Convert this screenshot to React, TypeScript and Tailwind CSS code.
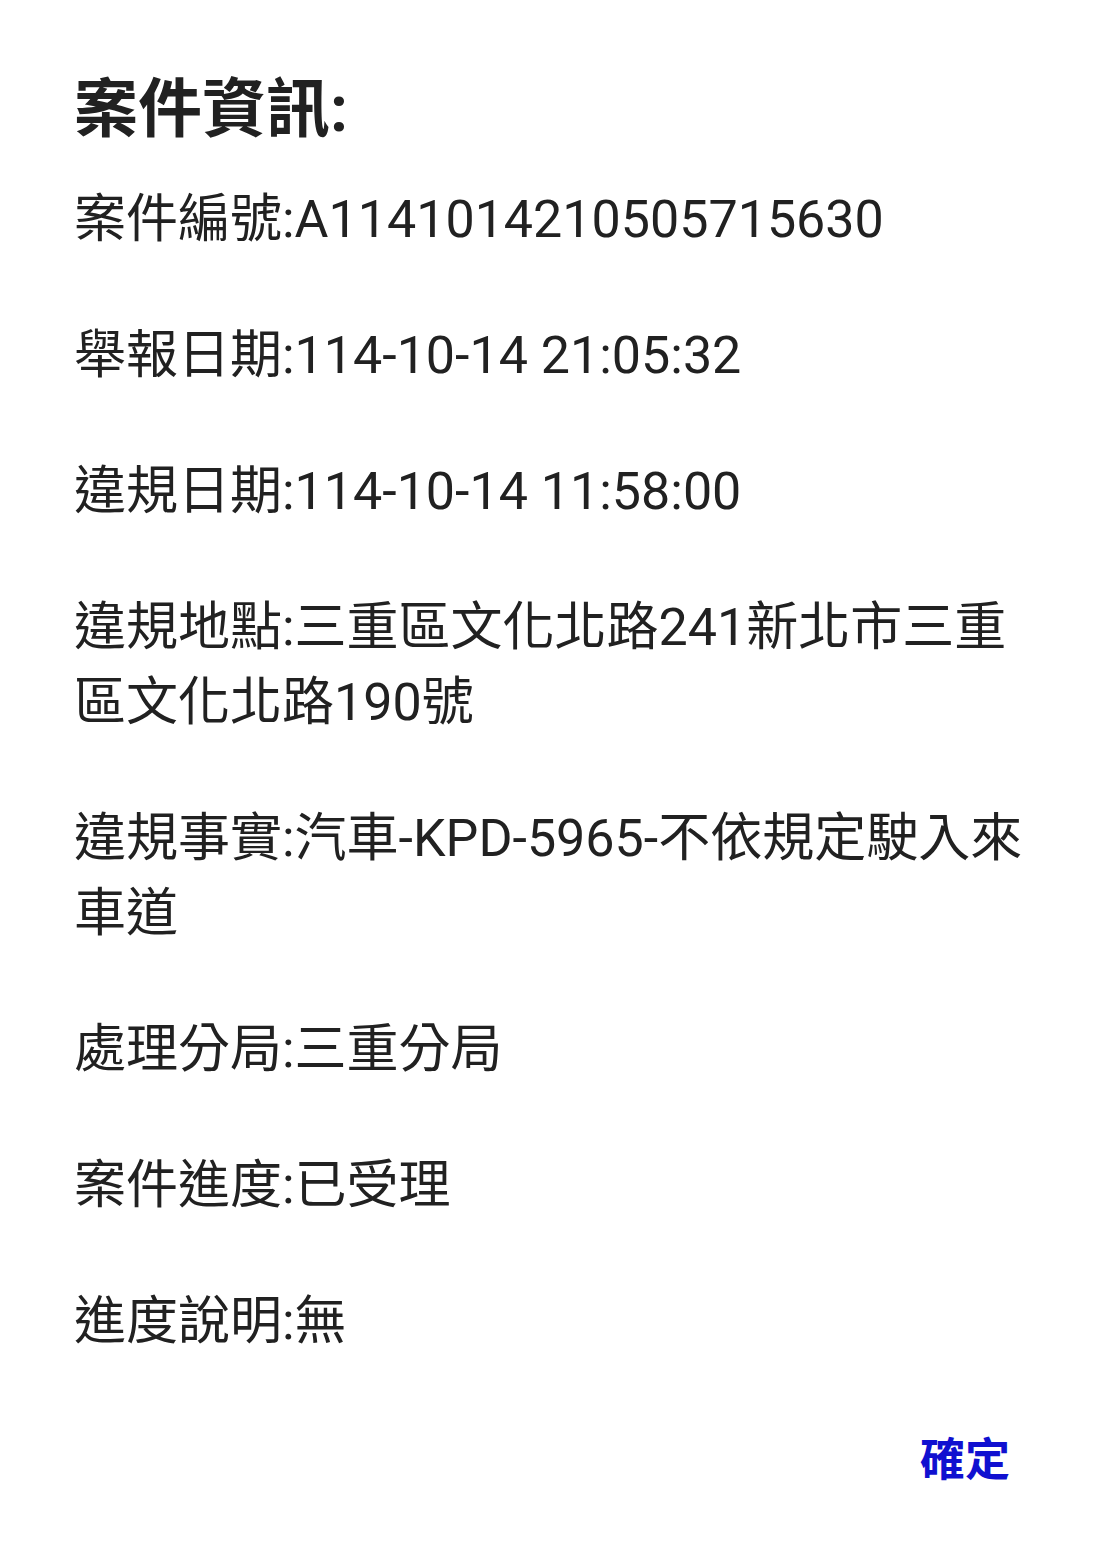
const rows: string[] = [
  "案件編號:A1141014210505715630",
  "舉報日期:114-10-14 21:05:32",
  "違規日期:114-10-14 11:58:00",
  "違規地點:三重區文化北路241新北市三重區文化北路190號",
  "違規事實:汽車-KPD-5965-不依規定駛入來車道",
  "處理分局:三重分局",
  "案件進度:已受理",
  "進度說明:無",
];

export default function App() {
  return (
    <div
      className="min-h-[1553px] w-[1101px] bg-white text-[#212121]"
      style={{ fontFamily: '"Roboto", "Noto Sans CJK TC", sans-serif' }}
    >
      <div className="pl-[74px] pt-[70px]">
        <h1 className="text-[64px] font-bold leading-[80px]">案件資訊:</h1>
        <div className="mt-[32px] flex w-[966px] flex-col gap-[61px]">
          {rows.map((r) => (
            <p key={r} className="text-[52px] leading-[75px] break-all">
              {r}
            </p>
          ))}
        </div>
      </div>
      <div className="mt-[72px] flex justify-end pr-[91px]">
        <button className="text-[45px] font-bold leading-[60px] text-[#1010d0]">確定</button>
      </div>
    </div>
  );
}
